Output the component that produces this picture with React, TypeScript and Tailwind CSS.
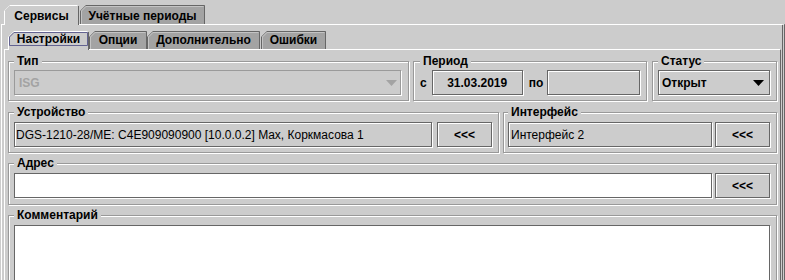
import React from "react";

type TabProps = {
  label: string;
  selected?: boolean;
  w: number;
  h: number;
  className: string;
  padTop: string;
};

function Tab({ label, selected, w, h, className, padTop }: TabProps) {
  const H = selected ? h + 1 : h;
  return (
    <div
      className={
        "relative flex justify-center font-bold leading-[14px] [clip-path:polygon(0_6px,6px_0,100%_0,100%_100%,0_100%)] " +
        (selected ? "bg-[#cccccc] z-10 mb-[-1px] " : "bg-[#a3a3a3] ") +
        padTop +
        " " +
        className
      }
    >
      <svg
        className="absolute left-0 top-0 pointer-events-none"
        width={w}
        height={H}
        viewBox={`0 0 ${w} ${H}`}
      >
        {selected ? (
          <>
            <polyline
              points={`0.5,${H} 0.5,5.5 5.5,0.5 ${w - 1.5},0.5`}
              fill="none"
              stroke="#ffffff"
            />
            <line x1={w - 0.5} y1={1} x2={w - 0.5} y2={H} stroke="#666666" />
          </>
        ) : (
          <>
            <polyline
              points={`1.5,${H} 1.5,6 6,1.5 ${w - 1.5},1.5`}
              fill="none"
              stroke="#c4c4c4"
            />
            <polyline
              points={`0.5,${H} 0.5,5.5 5.5,0.5 ${w - 0.5},0.5 ${w - 0.5},${H}`}
              fill="none"
              stroke="#666666"
            />
          </>
        )}
      </svg>
      <span className="relative">{label}</span>
    </div>
  );
}

function InnerSelTab({ label, w, h, className }: { label: string; w: number; h: number; className: string }) {
  const H = h + 1;
  return (
    <div
      className={
        "relative z-10 mb-[-1px] flex justify-center pt-[1px] font-bold leading-[14px] bg-[#cccccc] [clip-path:polygon(0_6px,6px_0,100%_0,100%_100%,0_100%)] " +
        className
      }
    >
      <svg className="absolute left-0 top-0 pointer-events-none" width={w} height={H} viewBox={`0 0 ${w} ${H}`}>
        <polyline points={`0.5,${H} 0.5,5.5 5.5,0.5 ${w - 1.5},0.5`} fill="none" stroke="#ffffff" />
        <line x1={w - 0.5} y1={1} x2={w - 0.5} y2={H} stroke="#666666" />
        <polyline
          points={`1.5,${H - 4.5} 1.5,6 6,1.5 ${w - 1.5},1.5 ${w - 1.5},${H - 4.5} 1.5,${H - 4.5}`}
          fill="none"
          stroke="#636391"
        />
      </svg>
      <span className="relative">{label}</span>
    </div>
  );
}

function Group({
  label,
  className,
  children,
}: {
  label: string;
  className: string;
  children?: React.ReactNode;
}) {
  return (
    <fieldset
      className={
        "min-w-0 border border-[#999999] shadow-[1px_1px_0_#ffffff,inset_1px_1px_0_#ffffff] " + className
      }
    >
      <legend className="px-[3px] font-bold leading-[14px] bg-[#cccccc]">{label}</legend>
      {children}
    </fieldset>
  );
}

function Arrow({ color }: { color: string }) {
  return (
    <svg width="11" height="6" viewBox="0 0 11 6">
      <polygon points="0,0 11,0 5.5,6" fill={color} />
    </svg>
  );
}

function Btn({ className }: { className: string }) {
  return (
    <div
      className={
        "h-[25px] border border-[#666666] shadow-[1px_1px_0_#ffffff,inset_1px_1px_0_#ffffff] bg-[#cccccc] flex items-center justify-center font-bold leading-[14px] " +
        className
      }
    >
      &lt;&lt;&lt;
    </div>
  );
}

export default function App() {
  return (
    <div className="w-[785px] h-[280px] overflow-hidden bg-[#cccccc] text-[12px] text-black font-['Liberation_Sans',Arial,sans-serif]">
      {/* outer tabs */}
      <div className="flex items-start pl-[4px] pt-[5px] h-[24px]">
        <Tab label="Сервисы" selected w={75} h={19} className="w-[75px] h-[20px]" padTop="pt-[4px]" />
        <Tab label="Учётные периоды" w={125} h={19} className="ml-[1px] w-[125px] h-[19px]" padTop="pt-[4px]" />
      </div>

      {/* outer panel */}
      <div className="ml-[1px] w-[784px] h-[256px] border-l border-t border-white border-r-[3px] border-r-[#666666] border-double">
        {/* inner tabs */}
        <div className="flex items-start pl-[6px] pt-[6px] h-[24px]">
          <InnerSelTab label="Настройки" w={81} h={18} className="w-[81px] h-[19px]" />
          <Tab label="Опции" w={58} h={18} className="w-[58px] h-[18px]" padTop="pt-[2px]" />
          <Tab label="Дополнительно" w={113} h={18} className="w-[113px] h-[18px]" padTop="pt-[2px]" />
          <Tab label="Ошибки" w={65} h={18} className="ml-[1px] w-[65px] h-[18px]" padTop="pt-[2px]" />
        </div>

        {/* inner panel */}
        <div className="ml-[2px] mr-[1px] h-[240px] border-l border-t border-white border-r border-r-[#666666] px-[3px] pt-[4px]">
          {/* row 1 */}
          <div className="flex items-start">
            <Group label="Тип" className="w-[401px] pl-[5px] pr-[7px] pt-[2px] pb-[5px]">
              <div className="h-[25px] border border-[#9a9a9a] shadow-[1px_1px_0_#ffffff] flex items-center justify-between pl-[4px] pr-[3px] font-bold text-[#a3a3a3]">
                <span>ISG</span>
                <Arrow color="#a3a3a3" />
              </div>
            </Group>
            <Group label="Период" className="ml-[4px] w-[234px] pl-[6px] pr-[5px] pt-[2px] pb-[5px]">
              <div className="flex items-center">
                <span className="font-bold">с</span>
                <div className="ml-[5px] w-[91px] h-[25px] border border-[#666666] shadow-[1px_1px_0_#ffffff,inset_1px_1px_0_#ffffff] flex items-center justify-center font-bold">
                  31.03.2019
                </div>
                <span className="ml-[6px] font-bold">по</span>
                <div className="ml-[4px] w-[93px] h-[25px] border border-[#666666] shadow-[1px_1px_0_#ffffff,inset_1px_1px_0_#ffffff]" />
              </div>
            </Group>
            <Group label="Статус" className="ml-[5px] flex-1 pl-[5px] pr-[6px] pt-[2px] pb-[5px]">
              <div className="h-[25px] border border-[#666666] shadow-[1px_1px_0_#ffffff,inset_1px_1px_0_#ffffff] flex items-center justify-between pl-[3px] pr-[5px] font-bold">
                <span>Открыт</span>
                <Arrow color="#000000" />
              </div>
            </Group>
          </div>

          {/* row 2 */}
          <div className="flex items-start mt-[4px]">
            <Group label="Устройство" className="w-[491px] pl-[5px] pr-[6px] pt-[3px] pb-[5px]">
              <div className="flex">
                <div className="flex-1 min-w-0 h-[25px] border border-[#666666] shadow-[1px_1px_0_#ffffff,inset_1px_1px_0_#ffffff] flex items-center pl-[1px] whitespace-nowrap overflow-hidden">
                  DGS-1210-28/ME: C4E909090900 [10.0.0.2] Max, Коркмасова 1
                </div>
                <Btn className="ml-[5px] w-[55px]" />
              </div>
            </Group>
            <Group label="Интерфейс" className="ml-[4px] flex-1 pl-[4px] pr-[6px] pt-[3px] pb-[5px]">
              <div className="flex">
                <div className="flex-1 min-w-0 h-[25px] border border-[#666666] shadow-[1px_1px_0_#ffffff,inset_1px_1px_0_#ffffff] flex items-center pl-[2px] whitespace-nowrap">
                  Интерфейс 2
                </div>
                <Btn className="ml-[3px] w-[55px]" />
              </div>
            </Group>
          </div>

          {/* row 3 */}
          <div className="mt-[3px]">
            <Group label="Адрес" className="pl-[5px] pr-[6px] pt-[3px] pb-[6px]">
              <div className="flex">
                <div className="flex-1 min-w-0 h-[25px] border border-[#666666] shadow-[1px_1px_0_#ffffff] bg-white" />
                <Btn className="ml-[3px] w-[55px]" />
              </div>
            </Group>
          </div>

          {/* row 4 */}
          <div className="mt-[3px]">
            <Group label="Комментарий" className="pl-[5px] pr-[6px] pt-[3px] pb-[6px]">
              <div className="h-[80px] border border-[#666666] shadow-[1px_1px_0_#ffffff] bg-white" />
            </Group>
          </div>
        </div>
      </div>
    </div>
  );
}
